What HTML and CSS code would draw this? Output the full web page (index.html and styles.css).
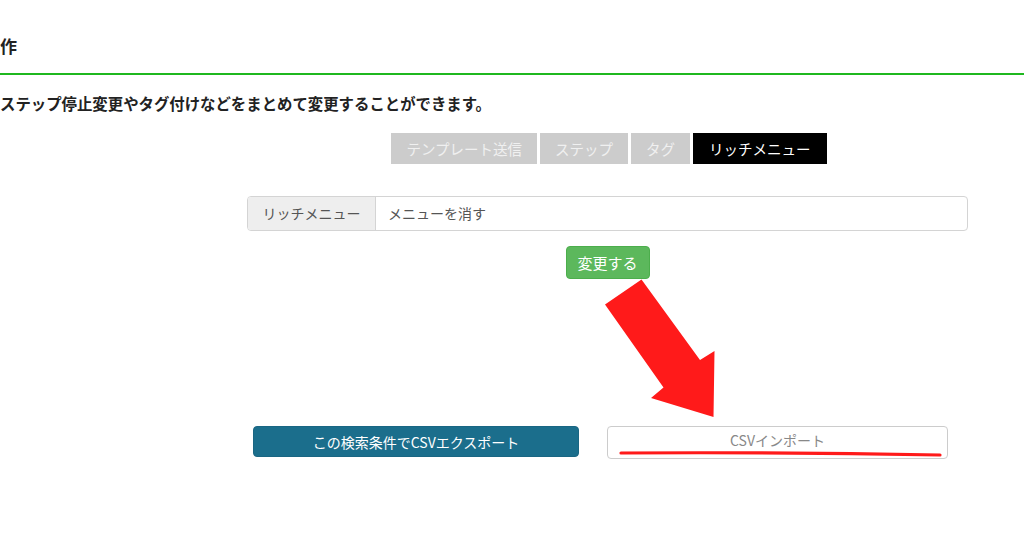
FILE: index.html
```html
<!DOCTYPE html>
<html lang="ja">
<head>
<meta charset="utf-8">
<link rel="stylesheet" href="styles.css">
</head>
<body>
<div class="page">
  <div class="head"><h2 class="title">作</h2></div>
  <p class="desc">ステップ停止変更やタグ付けなどをまとめて変更することができます。</p>
  <div class="main">
    <div class="tabs">
      <span class="tab">テンプレート送信</span>
      <span class="tab">ステップ</span>
      <span class="tab">タグ</span>
      <span class="tab active">リッチメニュー</span>
    </div>
    <div class="group">
      <span class="addon">リッチメニュー</span>
      <span class="field">メニューを消す</span>
    </div>
    <div class="submit-row"><button class="btn-green">変更する</button></div>
    <div class="bottom">
      <button class="btn-export">この検索条件でCSVエクスポート</button>
      <button class="btn-import">CSVインポート</button>
    </div>
  </div>
  <svg class="arrow" width="1024" height="538" viewBox="0 0 1024 538">
    <polygon points="641.5,279.5 700,360 714.5,351 713.5,417 651,398 663.5,387.5 605,304.5" fill="#ff1a1a"/>
    <path d="M621 453 Q780 452 940 455" stroke="#ff1a1a" stroke-width="3.2" stroke-linecap="round" fill="none"/>
  </svg>
</div>
</body>
</html>
```
FILE: styles.css
```css
* { box-sizing: border-box; }
html, body { margin: 0; padding: 0; background: #fff; }
body {
  font-family: "Noto Sans CJK JP", "Noto Sans", sans-serif;
  color: #333;
  width: 1024px;
  height: 538px;
  overflow: hidden;
}
.page { position: relative; width: 1024px; height: 538px; }
.head {
  height: 75px;
  border-bottom: 2px solid #1fb81f;
  display: flex;
  align-items: center;
  padding-top: 18px;
}
.title {
  margin: 0;
  font-size: 17px;
  font-weight: bold;
  color: #222;
  line-height: 1;
}
.desc {
  margin: 18px 0 0 0;
  font-size: 15.4px;
  font-weight: bold;
  color: #222;
  line-height: 20px;
}
.main {
  margin-left: 247px;
  width: 721px;
}
.tabs {
  margin-top: 20px;
  display: flex;
  justify-content: center;
  gap: 3px;
  padding-left: 3px;
}
.tab {
  height: 31px;
  background: #cccccc;
  color: #f0f0f0;
  font-size: 14.5px;
  line-height: 31px;
  padding: 0 15px;
}
.tab.active { background: #000; color: #fff; padding: 0 16px; }
.group {
  margin-top: 32px;
  display: flex;
  height: 35px;
  border: 1px solid #d4d4d4;
  border-radius: 4px;
  overflow: hidden;
}
.addon {
  width: 128px;
  background: #eeeeee;
  border-right: 1px solid #d4d4d4;
  color: #555;
  font-size: 14px;
  line-height: 33px;
  text-align: center;
}
.field {
  flex: 1;
  color: #555;
  font-size: 14px;
  line-height: 33px;
  padding-left: 12px;
}
.submit-row {
  display: flex;
  justify-content: center;
  margin-top: 15px;
}
button { font-family: inherit; cursor: pointer; }
.btn-green {
  width: 84px;
  height: 33px;
  background: #5cb85c;
  border: 1px solid #4cae4c;
  border-radius: 4px;
  color: #fff;
  font-size: 15px;
  padding: 0;
}
.bottom {
  margin-top: 147px;
  display: flex;
}
.btn-export {
  margin-left: 6px;
  width: 326px;
  height: 31px;
  background: #1b6e8c;
  border: 1px solid #1a6683;
  border-radius: 4px;
  color: #fff;
  font-size: 14px;
  padding: 0;
}
.btn-import {
  margin-left: 28px;
  width: 341px;
  height: 33px;
  background: #fff;
  border: 1px solid #cccccc;
  border-radius: 4px;
  color: #888;
  font-size: 14px;
  padding: 0 0 5px 0;
}
.arrow { position: absolute; left: 0; top: 0; pointer-events: none; }
```
